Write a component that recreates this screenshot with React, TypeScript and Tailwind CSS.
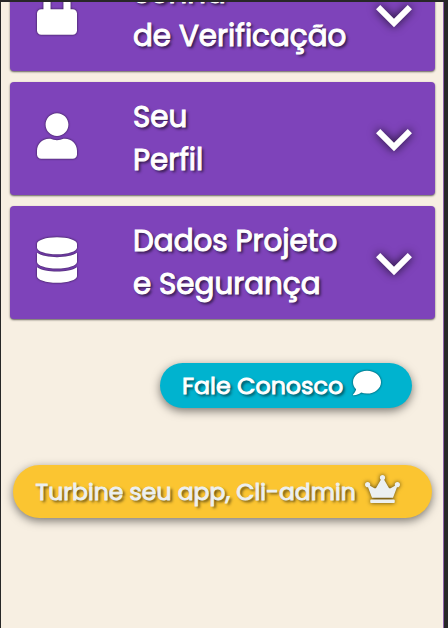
import type { ReactNode } from "react";
import { FaComment, FaCrown, FaDatabase, FaLock, FaUser } from "react-icons/fa";

function Chevron() {
  return (
    <svg viewBox="6 8.59 12 7.41" className="mt-[4.5px] h-[22.2px] w-9 overflow-visible fill-white drop-shadow-[0_0_5px_rgba(0,0,0,0.8)]">
      <path d="M7.41 8.59 12 13.17l4.59-4.58L18 10l-6 6-6-6z" />
    </svg>
  );
}

function MenuCard({ icon, lines }: { icon: ReactNode; lines: string[] }) {
  return (
    <button className="flex h-[112.5px] w-[424.5px] shrink-0 items-center rounded-[4px] bg-[#7e43ba] pl-[26.5px] pr-[22.5px] text-left text-white shadow-[0_1px_2px_rgba(0,0,0,0.6)]">
      <span className="mb-[5px] flex w-[96.5px] shrink-0 drop-shadow-[0_0_1px_rgba(0,0,0,0.7)]">{icon}</span>
      <span className="-mt-px flex grow flex-col text-[29.4px] font-normal leading-[43px] [-webkit-text-stroke:1px_currentColor] [text-shadow:2px_2px_3px_rgba(0,0,0,0.7)]">
        {lines.map((line) => (
          <span key={line} className="whitespace-nowrap">
            {line}
          </span>
        ))}
      </span>
      <Chevron />
    </button>
  );
}

export default function App() {
  return (
    <div className="h-[628px] w-[448px] overflow-hidden bg-[#272727] pl-px pt-[2px] font-['Poppins','Inter',sans-serif]">
      <main className="flex h-[626px] w-[443px] flex-col overflow-hidden border-r border-[#8c62a8] bg-[#f7efe2] pl-[9px]">
        <div className="-mt-[44px] flex flex-col gap-[11.5px]">
          <MenuCard
            icon={<FaLock className="h-[46px] w-[40px]" />}
            lines={["Senha", "de Verificação"]}
          />
          <MenuCard
            icon={<FaUser className="h-[46px] w-[40px]" />}
            lines={["Seu", "Perfil"]}
          />
          <MenuCard
            icon={<FaDatabase className="h-[46px] w-[40px]" />}
            lines={["Dados Projeto", "e Segurança"]}
          />
        </div>
        <button className="ml-[150px] mt-[44.5px] flex h-[45px] w-[252px] shrink-0 items-center rounded-full bg-[#00b3cf] pl-[22px] text-left text-[23.8px] font-normal text-white shadow-[0_3px_10px_rgba(0,0,0,0.5)]">
          <span className="w-[170.5px] whitespace-nowrap pt-px [-webkit-text-stroke:0.9px_currentColor] [text-shadow:2px_2px_3px_rgba(0,0,0,0.7)]">Fale Conosco</span>
          <FaComment className="mb-[5px] size-[28px] drop-shadow-[0_0_1px_rgba(0,0,0,0.7)]" />
        </button>
        <button className="ml-[3px] mt-[56.5px] flex h-[53.5px] w-[419px] shrink-0 items-center rounded-full bg-[#fbc531] pl-[22.5px] text-left text-[23.5px] font-normal text-[#ecf0f1] shadow-[0_3px_10px_rgba(0,0,0,0.5)]">
          <span className="w-[329.5px] whitespace-nowrap [-webkit-text-stroke:0.9px_currentColor] [text-shadow:2px_2px_3px_rgba(0,0,0,0.7)]">Turbine seu app, Cli-admin</span>
          <FaCrown className="mb-[5px] h-[28px] w-[35px] drop-shadow-[0_0_2px_rgba(0,0,0,0.7)]" />
        </button>
      </main>
    </div>
  );
}
